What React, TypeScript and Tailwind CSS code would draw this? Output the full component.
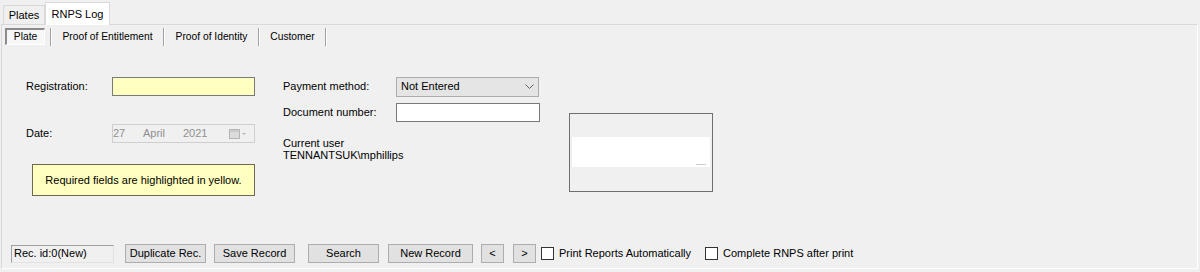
// RNPS Log form (WinForms look)

import React from 'react';

const font = { fontFamily: '"Liberation Sans", Arial, sans-serif' };

function WinButton({ label, w }: { label: string; w: string }) {
  return (
    <button
      type="button"
      className={`${w} h-[19px] flex items-center justify-center bg-[#e1e1e1] border border-[#adadad] text-[11px] text-black leading-none`}
    >
      {label}
    </button>
  );
}

function CheckOption({ label }: { label: string }) {
  return (
    <label className="flex items-center gap-[5px] text-[11px] text-black">
      <span className="w-[13px] h-[13px] bg-white border border-[#333333]" />
      {label}
    </label>
  );
}

export default function App() {
  return (
    <div className="w-[1200px] h-[272px] bg-[#f0f0f0] flex flex-col text-black" style={font}>
      {/* outer tabs */}
      <div className="h-[24px] flex items-end pl-[3px] text-[11px]">
        <div className="h-[19px] w-[42px] flex items-center justify-center border border-b-0 border-[#d9d9d9] bg-[#f0f0f0]">
          Plates
        </div>
        <div className="h-[23px] w-[65px] -mb-px flex items-center justify-center border border-b-0 border-[#d9d9d9] bg-white relative">
          RNPS Log
        </div>
      </div>

      {/* tab page */}
      <div className="flex-1 flex flex-col ml-[1px] mr-[2px] mb-[3px] border-t border-l border-[#d9d9d9] border-b border-b-white border-r border-r-white">
        {/* inner button tabs */}
        <div className="h-[22px] flex items-center pl-[3px] pt-[1px] text-[10.25px]">
          <div className="w-[40px] h-[17px] flex items-center justify-center bg-[#f7f7f7] border-t-2 border-l-2 border-[#8a8a8a] border-r border-b border-r-white border-b-white">
            Plate
          </div>
          <div className="ml-[5px] w-[2px] h-[18px] border-l border-[#a0a0a0] border-r border-r-white" />
          <div className="w-[111px] text-center">Proof of Entitlement</div>
          <div className="w-[2px] h-[18px] border-l border-[#a0a0a0] border-r border-r-white" />
          <div className="w-[93px] text-center">Proof of Identity</div>
          <div className="w-[2px] h-[18px] border-l border-[#a0a0a0] border-r border-r-white" />
          <div className="w-[65px] text-center">Customer</div>
          <div className="w-[2px] h-[18px] border-l border-[#a0a0a0] border-r border-r-white" />
        </div>

        {/* form body */}
        <div className="flex-1 flex text-[11px]">
          {/* left column */}
          <div className="w-[257px] ml-[24px] pt-[30px] flex flex-col">
            <div className="h-[19px] flex items-center">
              <span className="w-[86px]">Registration:</span>
              <div className="w-[143px] h-[19px] bg-[#ffffc0] border border-[#7a7a7a]" />
            </div>
            <div className="mt-[28px] h-[19px] flex items-center">
              <span className="w-[86px]">Date:</span>
              <div className="w-[143px] h-[19px] border border-[#cfcfcf] flex items-center text-[#8f8f8f]">
                <span className="w-[30px]">27</span>
                <span className="w-[40px]">April</span>
                <span className="w-[45px]">2021</span>
                <svg width="20" height="10" viewBox="0 0 20 10" className="ml-[1px]">
                  <rect x="0.5" y="0.5" width="10" height="9" fill="#dcdcdc" stroke="#b4b4b4" />
                  <rect x="1.5" y="1.5" width="8" height="1.5" fill="#c4c4c4" />
                  <path d="M13 4 L17 4 L15 6 Z" fill="#b4b4b4" />
                </svg>
              </div>
            </div>
            <div className="mt-[21px] ml-[6px] w-[223px] h-[32px] bg-[#ffffc0] border border-[#6b6b55] flex items-center justify-center">
              Required fields are highlighted in yellow.
            </div>
          </div>

          {/* middle column */}
          <div className="w-[286px] pt-[30px] flex flex-col">
            <div className="h-[19px] flex items-center">
              <span className="w-[113px]">Payment method:</span>
              <div className="w-[143px] h-[20px] bg-[#e5e5e5] border border-[#acacac] flex items-center justify-between pl-[4px] pr-[4px]">
                <span>Not Entered</span>
                <svg width="9" height="6" viewBox="0 0 9 6">
                  <polyline points="0.5,0.5 4.5,4.5 8.5,0.5" fill="none" stroke="#606060" strokeWidth="1" />
                </svg>
              </div>
            </div>
            <div className="mt-[7px] h-[19px] flex items-center">
              <span className="w-[113px]">Document number:</span>
              <div className="w-[144px] h-[19px] bg-white border border-[#7a7a7a]" />
            </div>
            <div className="mt-[15px] leading-[12px]">
              <div>Current user</div>
              <div>TENNANTSUK\mphillips</div>
            </div>
          </div>

          {/* preview box */}
          <div className="pt-[66px]">
            <div className="w-[144px] h-[79px] border border-[#6e6e6e] flex flex-col px-[2px] pt-[23px]">
              <div className="h-[30px] bg-white flex items-end justify-end pr-[4px] pb-[2px]">
                <div className="w-[10px] h-px bg-[#cccccc]" />
              </div>
            </div>
          </div>
        </div>

        {/* bottom bar */}
        <div className="h-[19px] mb-[5px] flex items-center pl-[9px] text-[11px]">
          <div className="w-[103px] h-[18px] border border-[#a0a0a0] border-r-[#e3e3e3] border-b-[#e3e3e3] flex items-center pl-[2px]">
            Rec. id:0(New)
          </div>
          <div className="ml-[11px]">
            <WinButton label="Duplicate Rec." w="w-[81px]" />
          </div>
          <div className="ml-[8px]">
            <WinButton label="Save Record" w="w-[81px]" />
          </div>
          <div className="ml-[13px]">
            <WinButton label="Search" w="w-[71px]" />
          </div>
          <div className="ml-[9px]">
            <WinButton label="New Record" w="w-[85px]" />
          </div>
          <div className="ml-[8px]">
            <WinButton label="<" w="w-[23px]" />
          </div>
          <div className="ml-[9px]">
            <WinButton label=">" w="w-[23px]" />
          </div>
          <div className="ml-[5px]">
            <CheckOption label="Print Reports Automatically" />
          </div>
          <div className="ml-[14px]">
            <CheckOption label="Complete RNPS after print" />
          </div>
        </div>
      </div>
    </div>
  );
}
